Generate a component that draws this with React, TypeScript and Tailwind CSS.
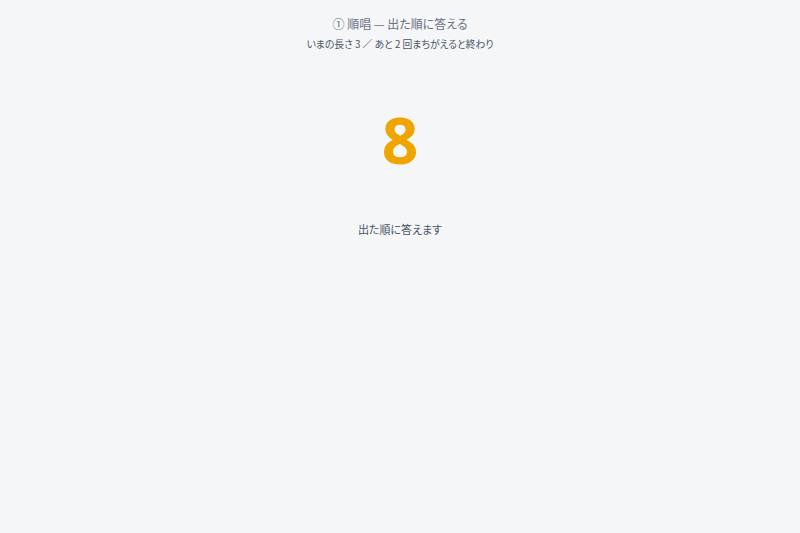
export default function App() {
  return (
    <div
      className="min-h-screen w-full bg-[#f4f6f8] text-[#6b7280] [font-feature-settings:'palt']"
      style={{ fontFamily: '"Noto Sans CJK JP", "Noto Sans", sans-serif' }}
    >
      <div className="flex flex-col items-center pt-[16px]">
        <p className="text-[12px] leading-[16px] text-[#6b7280]">① 順唱 — 出た順に答える</p>
        <p className="mt-[5px] text-[9.8px] leading-[14px] text-[#4b5563]">
          いまの長さ 3 ／ あと 2 回まちがえると終わり
        </p>
        <div
          className="mt-[57px] text-[64px] font-bold leading-[64px] text-[#f0a400]"
          style={{ fontFamily: '"Noto Sans", sans-serif' }}
        >
          8
        </div>
        <p className="mt-[49px] text-[11px] leading-[16px] text-[#4b5563]">出た順に答えます</p>
      </div>
    </div>
  );
}
